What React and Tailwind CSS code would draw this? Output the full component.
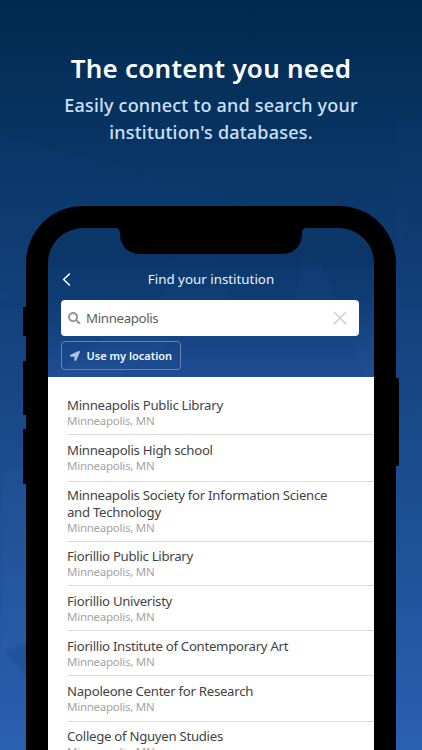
import { FaSearch, FaLocationArrow } from 'react-icons/fa';

const institutions = [
  { name: 'Minneapolis Public Library', spacing: 'pt-[20px] pb-[6px]' },
  { name: 'Minneapolis High school', spacing: 'pt-[7px] pb-[8px]' },
  { name: 'Minneapolis Society for Information Science and Technology', spacing: 'pt-[5px] pb-[6px]' },
  { name: 'Fiorillio Public Library', spacing: 'pt-[6px] pb-[6px]' },
  { name: 'Fiorillio Univeristy', spacing: 'pt-[7px] pb-[6px]' },
  { name: 'Fiorillio Institute of Contemporary Art', spacing: 'pt-[7px] pb-[6px]' },
  { name: 'Napoleone Center for Research', spacing: 'pt-[7px] pb-[7px]' },
  { name: 'College of Nguyen Studies', spacing: 'pt-[6px] pb-[7px]' },
];

function Backdrop() {
  return (
    <svg className="absolute inset-0 h-full w-full" viewBox="0 0 422 750" aria-hidden="true">
      <path d="M0 134 L260 208 L0 300 Z" fill="#2a62b0" opacity="0.04" />
      <path d="M396 240 L406 242 L410 200 L422 195 V120 H396 Z" fill="#2a62b0" opacity="0.03" />
      <path d="M2 470 H26 V643 L5 655 L2 655 Z" fill="#5a8ad0" opacity="0.05" />
      <path d="M5 651 L26 643 V677 Z" fill="#001f50" opacity="0.1" />
    </svg>
  );
}

function SideButtons() {
  return (
    <>
      <div className="absolute top-[101px] -left-[3px] h-[29px] w-[4px] rounded-l-[1px] bg-black" />
      <div className="absolute top-[155px] -left-[3px] h-[54px] w-[4px] rounded-l-[1px] bg-black" />
      <div className="absolute top-[223px] -left-[3px] h-[55px] w-[4px] rounded-l-[1px] bg-black" />
      <div className="absolute top-[172px] -right-[3px] h-[88px] w-[4px] rounded-r-[1px] bg-black" />
    </>
  );
}

function Notch() {
  return (
    <svg className="absolute top-0 left-[67px]" width="192" height="26" viewBox="0 0 192 26" aria-hidden="true">
      <path d="M0 0 C4 0 5 2 5 6 C5 18 13 26 25 26 H167 C179 26 187 18 187 6 C187 2 188 0 192 0 Z" fill="#000" />
    </svg>
  );
}

function Header() {
  return (
    <header className="relative h-[149px] bg-linear-to-b from-[#0a3767] via-[#0f3c74] to-[#1f4d95] px-[13px] pt-[40px]">
      <svg className="absolute inset-0" width="326" height="149" viewBox="0 0 326 149" aria-hidden="true">
        <path d="M0 18 H326 V40 H0 Z" fill="#001f50" opacity="0.08" />
        <path d="M128 28 H164 L182 73 H110 Z" fill="#4a80c8" opacity="0.03" />
        <path d="M267 28 L290 73 H326 V149 H318 L302 108 H240 L255 28 Z" fill="#4a80c8" opacity="0.04" />
        <path d="M0 149 L60 108 H130 L70 149 Z" fill="#4a80c8" opacity="0.05" />
      </svg>
      <div className="relative flex h-[22px] items-center justify-center">
        <svg className="absolute top-[5px] left-[1px]" width="9" height="13" viewBox="0 0 9 13" fill="none" aria-hidden="true">
          <path d="M7.4 1 L1.6 6.5 L7.4 12" stroke="#fff" strokeWidth="1.6" strokeLinecap="round" strokeLinejoin="round" />
        </svg>
        <h2 className="text-[13.3px] leading-[22px] tracking-[0.02px] text-[#eef3fa]">Find your institution</h2>
      </div>
      <div className="relative mt-[10px] flex h-[36px] w-[298px] items-center rounded-[4px] bg-white px-[7px]">
        <FaSearch className="h-[12.5px] w-[12.5px] text-[#97999d]" />
        <span className="ml-[5.5px] flex-1 pt-px text-[13.3px] tracking-[-0.36px] text-[#5c5e62]">Minneapolis</span>
        <svg className="mr-[5px]" width="14" height="14" viewBox="0 0 14 14" aria-hidden="true">
          <path d="M1.2 1.2 L12.8 12.8 M12.8 1.2 L1.2 12.8" stroke="#ccc" strokeWidth="1.4" strokeLinecap="round" />
        </svg>
      </div>
      <button className="relative mt-[5px] flex h-[29px] w-[120px] items-center rounded-[4px] border border-[#6482b4] pl-[8px] whitespace-nowrap">
        <FaLocationArrow className="h-[10px] w-[10px] text-[#b4c2dc]" />
        <span className="ml-[6.5px] pt-px text-[11px] font-semibold text-[#f2f6fb]">Use my location</span>
      </button>
    </header>
  );
}

function InstitutionRow({ name, spacing }) {
  return (
    <li className={`border-b border-[#dcdcdc] ${spacing}`}>
      <p className="w-[275px] text-[13.2px] leading-[17px] tracking-[-0.28px] text-[#424347]">{name}</p>
      <p className="-mt-px text-[11.5px] leading-[15px] tracking-[-0.25px] text-[#a3a4a6]">Minneapolis, MN</p>
    </li>
  );
}

export default function App() {
  return (
    <main className="relative h-[750px] w-[422px] overflow-hidden bg-linear-to-b from-[#012a50] via-[#164684] to-[#2b5fb0] font-['Noto_Sans',sans-serif]">
      <Backdrop />
      <section className="relative h-[206px] pt-[51px] text-center">
        <h1 className="text-[26px] leading-[35px] font-semibold tracking-[0.25px] text-white">The content you need</h1>
        <p className="mx-auto mt-[6px] w-[310px] text-[18px] leading-[27px] font-medium tracking-[0.2px] text-[#cfe0f8]">
          Easily connect to and search your institution's databases.
        </p>
      </section>
      <div className="relative ml-[26px] h-[620px] w-[370px] rounded-t-[57px] bg-black px-[22px] pt-[22px]">
        <SideButtons />
        <div className="relative h-[598px] overflow-hidden rounded-t-[35px]">
          <Header />
          <Notch />
          <ul className="h-[449px] bg-white pl-[19px]">
            {institutions.map((item) => (
              <InstitutionRow key={item.name} name={item.name} spacing={item.spacing} />
            ))}
          </ul>
        </div>
      </div>
    </main>
  );
}
